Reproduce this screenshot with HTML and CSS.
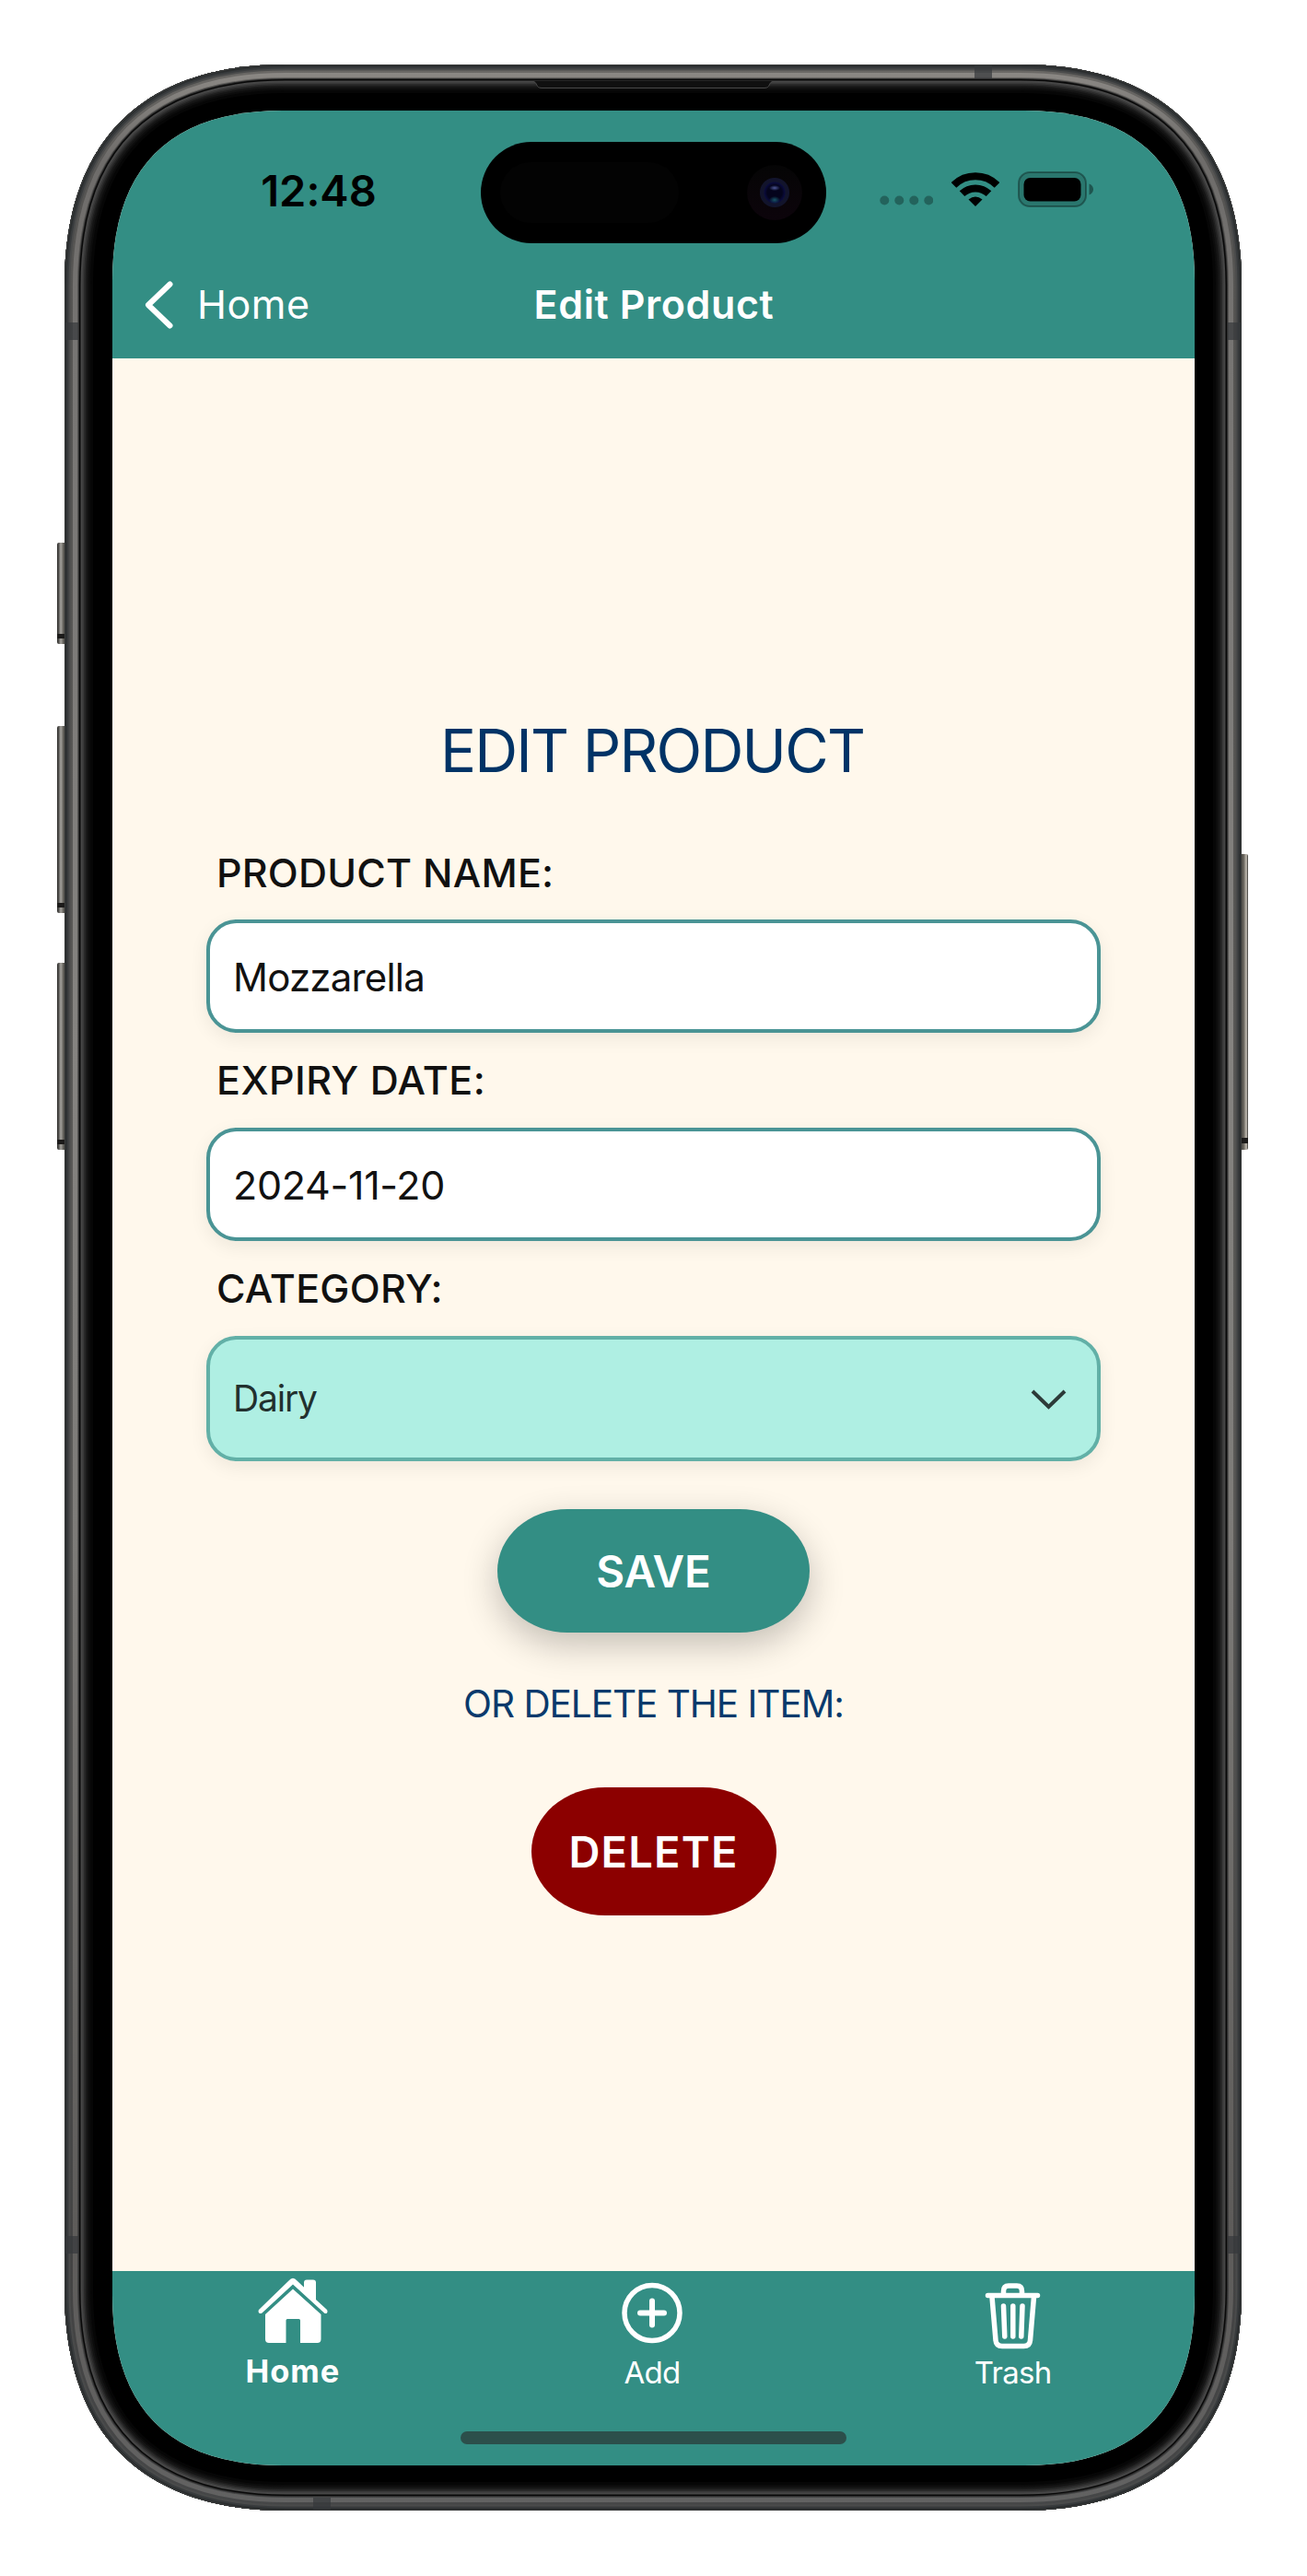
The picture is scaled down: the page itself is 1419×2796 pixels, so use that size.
FILE: index.html
```html
<!DOCTYPE html>
<html lang="en">
<head>
<meta charset="utf-8">
<title>Edit Product</title>
<link rel="stylesheet" href="styles.css">
</head>
<body>
<div class="phone">
  <svg class="phone-frame" width="1419" height="2796" viewBox="0 0 1419 2796" aria-hidden="true">
    <defs>
      <path id="shell" d="M310 70H1108C1264 70 1348 154 1348 310V2485C1348 2641 1264 2725 1108 2725H310C154 2725 70 2641 70 2485V310C70 154 154 70 310 70Z"/>
      <clipPath id="shell-clip"><use href="#shell"/></clipPath>
      <linearGradient id="metal" x1="0" y1="70" x2="0" y2="2725" gradientUnits="userSpaceOnUse">
        <stop offset="0" stop-color="#8d8a86"/><stop offset=".04" stop-color="#6e6c6a"/><stop offset=".12" stop-color="#777573"/><stop offset=".4" stop-color="#858380"/><stop offset=".6" stop-color="#7d7b78"/><stop offset=".88" stop-color="#5e5c5a"/><stop offset="1" stop-color="#626262"/>
      </linearGradient>
      <linearGradient id="metal-mid" x1="0" y1="70" x2="0" y2="2725" gradientUnits="userSpaceOnUse">
        <stop offset="0" stop-color="#6b6966"/><stop offset=".05" stop-color="#565553"/><stop offset=".6" stop-color="#5a5957"/><stop offset=".9" stop-color="#434343"/><stop offset="1" stop-color="#464748"/>
      </linearGradient>
      <linearGradient id="key" x1="0" y1="0" x2="1" y2="0">
        <stop offset="0" stop-color="#2b2a28"/><stop offset=".15" stop-color="#4d4c49"/><stop offset=".4" stop-color="#a5a39e"/><stop offset=".7" stop-color="#5e5c56"/><stop offset="1" stop-color="#33322f"/>
      </linearGradient>
      <linearGradient id="key-right" x1="0" y1="0" x2="1" y2="0">
        <stop offset="0" stop-color="#33322f"/><stop offset=".5" stop-color="#6e6a62"/><stop offset=".8" stop-color="#c5c0b6"/><stop offset="1" stop-color="#2b2a28"/>
      </linearGradient>
    </defs>
    <!-- side buttons -->
    <g fill="url(#key)">
      <rect x="62" y="589" width="10" height="110" rx="2"/><rect x="62" y="788" width="10" height="203" rx="2"/><rect x="62" y="1045" width="10" height="203" rx="2"/>
    </g>
    <rect x="1346" y="927" width="9" height="321" rx="2" fill="url(#key-right)"/>
    <g fill="#1c1b1a">
      <rect x="62" y="688" width="8" height="5"/><rect x="62" y="980" width="8" height="5"/><rect x="62" y="1237" width="8" height="5"/><rect x="1348" y="1235" width="7" height="6"/>
    </g>
    <!-- metal band and glass edge, widest stroke first -->
    <use href="#shell" fill="#000"/>
    <g clip-path="url(#shell-clip)" fill="none">
      <use href="#shell" stroke="#060606" stroke-width="62"/>
      <use href="#shell" stroke="#0c0c0c" stroke-width="56"/>
      <use href="#shell" stroke="#141414" stroke-width="52"/>
      <use href="#shell" stroke="#1e1e1e" stroke-width="48"/>
      <use href="#shell" stroke="#2b2b2b" stroke-width="45"/>
      <use href="#shell" stroke="#393939" stroke-width="42"/>
      <use href="#shell" stroke="#464646" stroke-width="39"/>
      <use href="#shell" stroke="#080808" stroke-width="35"/>
      <use href="#shell" stroke="#303030" stroke-width="32"/>
      <use href="#shell" stroke="url(#metal-mid)" stroke-width="30"/>
      <use href="#shell" stroke="url(#metal)" stroke-width="28"/>
      <use href="#shell" stroke="url(#metal-mid)" stroke-width="18"/>
      <use href="#shell" stroke="#4a4b4b" stroke-width="13"/>
      <use href="#shell" stroke="#383b3d" stroke-width="9"/>
      <use href="#shell" stroke="#2a2d2e" stroke-width="5"/>
      <use href="#shell" stroke="#3a3c3c" stroke-width="2"/>
    </g>
    <!-- antenna lines -->
    <g fill="#34373a" fill-opacity=".7">
      <rect x="1058" y="71" width="19" height="14"/><rect x="340" y="2711" width="19" height="13"/>
      <rect x="70" y="350" width="15" height="19"/><rect x="1333" y="350" width="15" height="19"/>
      <rect x="70" y="2427" width="15" height="19"/><rect x="1333" y="2427" width="15" height="19"/>
    </g>
    <path d="M578 88C584 88 581 95.500 588 95.500H830C837 95.500 834 88 840 88Z" fill="#101010"/>
    <path d="M578 88.500C584 88.500 581 95.500 588 95.500H830C837 95.500 834 88.500 840 88.500" fill="none" stroke="#484848"/>
  </svg>

  <main class="screen">
    <div class="status-bar">
      <div class="clock">12:48</div>
      <div class="island"><span class="sensor"></span><span class="camera"></span></div>
      <div class="status-icons">
        <svg width="58" height="40" viewBox="0 0 58 40" fill="#000" fill-opacity=".3"><circle cx="5.300" cy="31.500" r="5"/><circle cx="21.300" cy="31.500" r="5"/><circle cx="37.300" cy="31.500" r="5"/><circle cx="53.300" cy="31.500" r="5"/></svg>
        <svg width="52" height="40" viewBox="0 0 52 40" fill="none" stroke="#000" stroke-width="8"><path d="M2.500 15A33.500 33.500 0 0 1 49.500 15"/><path d="M11.500 24.200A21 21 0 0 1 40.500 24.200"/><path d="M18.500 30.500Q26 24.500 33.500 30.500L26 38Z" fill="#000" stroke="none"/></svg>
        <svg width="84" height="40" viewBox="0 0 84 40"><rect x="1" y="1" width="73" height="37" rx="12" fill-opacity=".16" stroke="#000" stroke-opacity=".33" stroke-width="2"/><rect x="6.500" y="7" width="62" height="25.500" rx="7"/><path d="M77.500 13.500C83.500 15.500 83.500 23.500 77.500 25.500Z" fill-opacity=".4"/></svg>
      </div>
    </div>

    <nav class="nav-bar">
      <a class="back"><svg width="33" height="54" viewBox="0 0 33 54" fill="none" stroke="#fff" stroke-width="6" stroke-linecap="round" stroke-linejoin="round"><path d="M29.500 4.500L6 27L29.500 49.500"/></svg><span>Home</span></a>
      <h1>Edit Product</h1>
    </nav>

    <section class="content">
      <h2>EDIT PRODUCT</h2>
      <form class="form">
        <label class="label-name" for="name">PRODUCT NAME:</label>
        <input class="field field-name" id="name" value="Mozzarella">
        <label class="label-date" for="date">EXPIRY DATE:</label>
        <input class="field field-date" id="date" value="2024-11-20">
        <label class="label-category">CATEGORY:</label>
        <div class="select"><span>Dairy</span><svg width="42" height="26" viewBox="0 0 42 26" fill="none" stroke="#2d3b39" stroke-width="4"><path d="M3 5L20.500 22L38 5"/></svg></div>
      </form>
      <button class="save">SAVE</button>
      <p class="hint">OR DELETE THE ITEM:</p>
      <button class="delete">DELETE</button>
    </section>

    <footer class="tab-bar">
      <div class="tabs">
        <a class="tab active"><svg width="76" height="80" viewBox="0 0 76 80" fill="#fff"><path d="M50 14V6.500Q50 3.500 53 3.500H60Q63 3.500 63 6.500V25L75 36Q76 38 75 39.500Q73.500 40.500 72 39.500L38 8.500L4.500 39.500Q2.500 40.500 1.300 39.500Q0 38 1 36L33.500 4.500Q38 -1 42.500 4.500L52 13.500Z"/><path d="M38 13.500L68.500 41V68Q68.500 72 64.500 72H46V47.500Q46 46 44.500 46H32Q30.500 46 30.500 47.500V72H12Q8 72 8 68V41Z"/></svg><span>Home</span></a>
        <a class="tab"><svg width="76" height="80" viewBox="0 0 76 80" fill="none" stroke="#fff" stroke-width="5.500"><circle cx="37" cy="39.500" r="30"/><path d="M37 26.500V52.500M24 39.500H50" stroke-width="6" stroke-linecap="round"/></svg><span>Add</span></a>
        <a class="tab"><svg width="76" height="80" viewBox="0 0 76 80" fill="none" stroke="#fff" stroke-width="5.500" stroke-linecap="round" stroke-linejoin="round"><path d="M9.500 20.500H63.500M26.500 19.500V16Q26.500 10 32 10H41Q46.500 10 46.500 16V19.500M14 22L18 69Q18.500 75.500 25 75.500H48.500Q55 75.500 55.500 69L59.500 22M26.500 32L27.800 65M36.800 32V65M47 32L45.800 65"/></svg><span>Trash</span></a>
      </div>
      <div class="home-indicator"></div>
    </footer>
  </main>
</div>
</body>
</html>
```

FILE: styles.css
```css
* { box-sizing: border-box; margin: 0; }

body {
  background: #fff;
  font-family: Inter, "Liberation Sans", sans-serif;
  font-feature-settings: "calt" 0;
}

.phone {
  position: relative;
  width: 1419px;
  height: 2796px;
  padding: 120px 122px;
}

.phone-frame { position: absolute; inset: 0; }

.screen {
  position: relative;
  display: flex;
  flex-direction: column;
  width: 1175px;
  height: 2556px;
  background: #fff8ec;
  clip-path: path("M185 0H990C1113 0 1175 62 1175 185V2371C1175 2494 1113 2556 990 2556H185C62 2556 0 2494 0 2371V185C0 62 62 0 185 0Z");
}

.status-bar {
  display: flex;
  align-items: center;
  height: 178px;
  background: #338e84;
}

.clock {
  width: 400px;
  padding: 0 0 4px 48px;
  text-align: center;
  font-size: 47px;
  font-weight: 600;
  line-height: 60px;
}

.island {
  display: flex;
  align-items: center;
  justify-content: space-between;
  width: 375px;
  height: 110px;
  padding: 0 26px 0 21px;
  border-radius: 55px;
  background: #000;
}

.sensor { width: 194px; height: 66px; border-radius: 33px; background: #030303; }

.camera {
  width: 60px;
  height: 60px;
  border-radius: 50%;
  background:
    radial-gradient(ellipse 6px 3px at 30px 25px, #4d5797, transparent),
    radial-gradient(ellipse 6px 4px at 30px 38px, #18566a, transparent),
    radial-gradient(circle at 50% 50%, #04041c 0 8px, #0a0b3c 11px, #12142c 12px 15.5px, transparent 16.5px),
    linear-gradient(#050505, #0c040b);
}

.status-icons { display: flex; gap: 20px; margin-left: 58px; padding-bottom: 6px; }
.status-icons svg { display: block; }

.nav-bar {
  display: grid;
  grid-template-columns: 1fr auto 1fr;
  align-items: center;
  height: 91px;
  padding-bottom: 26px;
  background: #338e84;
  color: #fff;
}

.nav-bar h1 { font-size: 43px; font-weight: 600; line-height: 65px; letter-spacing: .6px; padding-left: 1px; }

.back {
  display: flex;
  align-items: center;
  gap: 26px;
  padding-left: 33px;
  font-size: 43px;
  line-height: 65px;
  letter-spacing: .5px;
}
.back svg { display: block; }

.content {
  flex: 1;
  display: flex;
  flex-direction: column;
  align-items: center;
  padding-top: 385px;
}

.content h2 {
  margin-bottom: 43px;
  padding-right: 3px;
  color: #003366;
  font-size: 65px;
  font-weight: 400;
  line-height: 81px;
  letter-spacing: -1.77px;
}

.form { display: flex; flex-direction: column; width: 971px; }

.form label {
  height: 103px;
  padding-left: 11px;
  color: #111;
  font-size: 43px;
  font-weight: 500;
  line-height: 103px;
}
.form .label-name { height: 100px; line-height: 99px; letter-spacing: .21px; }
.form .label-date { letter-spacing: .45px; }
.form .label-category { letter-spacing: .25px; }

.field, .select {
  width: 100%;
  height: 123px;
  padding: 0 25px;
  border: 4px solid #4a9495;
  border-radius: 33px;
  background: #fff;
  color: #111;
  font: 400 42px/60px Inter, "Liberation Sans", sans-serif;
  box-shadow: 0 6px 20px rgba(0, 0, 0, .07);
}
.field-name { padding-top: 2px; letter-spacing: -.8px; }
.field-date { font-size: 43px; letter-spacing: -.3px; }

.select {
  display: flex;
  align-items: center;
  justify-content: space-between;
  height: 136px;
  padding: 0 31px 0 25px;
  border-color: #62b0a7;
  background: #afefe3;
  color: #22302e;
  font-size: 39px;
  letter-spacing: -1.2px;
}

button {
  padding: 0;
  border: 0;
  color: #fff;
  font-family: inherit;
  font-weight: 600;
}

.save {
  width: 339px;
  height: 134px;
  margin-top: 52px;
  border-radius: 76px / 67px;
  background: #338e84;
  font-size: 47.5px;
  box-shadow: 0 13px 38px rgba(0, 0, 0, .24);
}

.hint {
  color: #0a3a6c;
  font-size: 40.5px;
  line-height: 156px;
  letter-spacing: -1.05px;
}

.delete {
  width: 266px;
  height: 139px;
  margin-top: 12px;
  border-radius: 80px / 69.5px;
  background: #8c0000;
  font-size: 47px;
  letter-spacing: 1.2px;
}

.tab-bar {
  display: flex;
  flex-direction: column;
  align-items: center;
  height: 211px;
  background: #338e84;
  color: #fff;
}

.tabs { display: grid; grid-template-columns: repeat(3, 1fr); width: 100%; height: 174px; }

.tab {
  display: flex;
  flex-direction: column;
  align-items: center;
  padding-top: 6px;
  font-size: 33px;
  line-height: 48px;
  letter-spacing: -.7px;
}
.tab svg { display: block; }
.tab span { padding-right: 3px; }
.tab.active { font-size: 34.5px; font-weight: 700; letter-spacing: .9px; line-height: 46px; }
.tab.active span { padding-right: 0; }

.home-indicator { width: 419px; height: 14px; border-radius: 7px; background: #2c4f4b; }
```
